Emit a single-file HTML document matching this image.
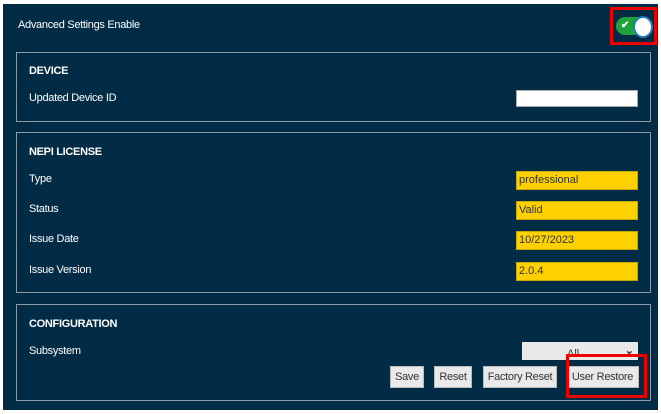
<!DOCTYPE html>
<html><head><style>
body{margin:0;width:661px;height:414px;background:#fff;position:relative;font-family:"Liberation Sans",sans-serif;overflow:hidden}
.outer{position:absolute;left:3px;top:4px;width:655px;height:406px;background:#022b45}
.a{position:absolute;color:#fff;font-size:11px;letter-spacing:-0.3px}
.b{font-weight:bold}
.box{position:absolute;left:16px;width:633px;border:1px solid #8a9aa6}
.in{position:absolute;left:516px;width:122px;height:17px;background:#fff;border:1px solid #aaa;box-sizing:border-box}
.y{background:#fdd000;border:1px solid #c9a800;font-size:11px;color:#333;padding:2px 2px;line-height:12px}
.btn{position:absolute;top:366px;height:22px;background:#e9e9e9;border:1px solid #bbb;box-sizing:border-box;font-size:11px;color:#333;text-align:center;line-height:20px;letter-spacing:-0.3px}
.red{position:absolute;border:3px solid #ee0000;box-sizing:border-box}
</style></head><body>
<div class="outer"></div>
<div class="a" style="left:18px;top:19px">Advanced Settings Enable</div>
<div style="position:absolute;left:616px;top:17px;width:35px;height:18px;border-radius:9px;background:#1fa23a"></div>
<div style="position:absolute;left:633px;top:16px;width:16px;height:18px;border-radius:50%;background:#fff;border:2px solid #1f7bc0"></div>
<div style="position:absolute;left:621px;top:20px;color:#fff;font-size:10px;font-weight:bold">✔</div>
<div class="red" style="left:610px;top:7px;width:47px;height:38px"></div>

<div class="box" style="top:52px;height:68px"></div>
<div class="a b" style="left:29px;top:65px">DEVICE</div>
<div class="a" style="left:29px;top:92px">Updated Device ID</div>
<div class="in" style="top:90px"></div>

<div class="box" style="top:132px;height:159px"></div>
<div class="a b" style="left:29px;top:146px">NEPI LICENSE</div>
<div class="a" style="left:29px;top:173px">Type</div>
<div class="a" style="left:29px;top:203px">Status</div>
<div class="a" style="left:29px;top:233px">Issue Date</div>
<div class="a" style="left:29px;top:264px">Issue Version</div>
<div class="in y" style="top:171px;height:19px">professional</div>
<div class="in y" style="top:201px;height:19px">Valid</div>
<div class="in y" style="top:231px;height:19px">10/27/2023</div>
<div class="in y" style="top:262px;height:19px">2.0.4</div>

<div class="box" style="top:304px;height:95px"></div>
<div class="a b" style="left:29px;top:318px">CONFIGURATION</div>
<div class="a" style="left:29px;top:345px">Subsystem</div>
<div style="position:absolute;left:522px;top:342px;width:116px;height:18px;background:#e9e9e9;font-size:11px;color:#333;line-height:18px"><span style="position:absolute;left:45px;top:3px">All</span><span style="position:absolute;right:4px;top:0;font-weight:bold">⌄</span></div>
<div class="btn" style="left:390px;width:34px">Save</div>
<div class="btn" style="left:434px;width:38px">Reset</div>
<div class="btn" style="left:483px;width:74px">Factory Reset</div>
<div class="btn" style="left:566px;width:73px">User Restore</div>
<div class="red" style="left:566px;top:354px;width:81px;height:44px"></div>
</body></html>
